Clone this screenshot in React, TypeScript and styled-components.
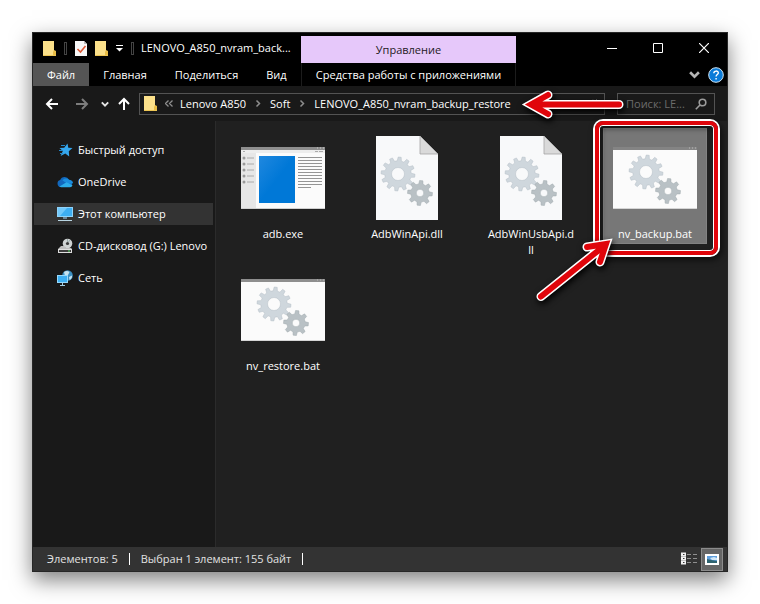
import React from "react";
import styled, { createGlobalStyle, css } from "styled-components";

const GlobalStyle = createGlobalStyle`
  * { box-sizing: border-box; }
  body {
    margin: 0;
    background: #fff;
    font-family: "Open Sans", "Noto Sans", sans-serif;
    font-size: 11px;
    line-height: 16px;
    color: #fff;
  }
  button, input { font: inherit; color: inherit; }
  svg { display: block; flex: none; }
`;

const plainButton = css`
  display: flex;
  align-items: center;
  justify-content: center;
  margin: 0;
  padding: 0;
  border: 0;
  background: none;
  white-space: nowrap;
`;

const Desktop = styled.div`
  display: flex;
  min-height: 100vh;
  padding: 32px;
`;

const Window = styled.main`
  display: flex;
  flex: 1;
  flex-direction: column;
  min-width: 0;
  border: 1px solid #262626;
  background: #191919;
  box-shadow: 0 8px 20px rgba(0, 0, 0, 0.5);
`;

const Header = styled.header`
  display: grid;
  grid-template-columns: 268px 215px 1fr;
  grid-template-rows: 30px 23px;
  background: #000;
`;

const QuickAccess = styled.div`
  display: flex;
  align-items: center;
  gap: 7px;
  padding-left: 10px;
  min-width: 0;
`;

const Grip = styled.span`
  width: 3px;
  height: 13px;
  border: 1px solid #444;
`;

const IconButton = styled.button<{ $width?: number }>`
  ${plainButton}
  width: ${(p) => p.$width ?? 14}px;
  height: 22px;
`;

const Title = styled.h1`
  margin: 0;
  font-size: 11px;
  font-weight: 400;
  white-space: nowrap;
`;

const ContextHeading = styled.div`
  display: flex;
  align-items: center;
  justify-content: center;
  margin-top: 3px;
  background: #e6c8fa;
  color: #1f1a24;
`;

const WindowControls = styled.div`
  display: flex;
  justify-content: flex-end;
`;

const ControlButton = styled.button`
  ${plainButton}
  width: 46px;
  height: 29px;
`;

const Tabs = styled.nav`
  display: flex;
`;

const Tab = styled.button<{ $file?: boolean }>`
  ${plainButton}
  padding: 0 14px;
  background: ${(p) => (p.$file ? "#555" : "transparent")};
`;

const ContextTab = styled.button`
  ${plainButton}
  border: solid #1c1c1c;
  border-width: 0 1px;
`;

const RibbonTools = styled.div`
  display: flex;
  align-items: center;
  justify-content: flex-end;
  gap: 8px;
  padding-right: 3px;
`;

const AddressRow = styled.div`
  display: flex;
  align-items: center;
  height: 35px;
  padding: 0 12px 0 8px;
`;

const History = styled.div`
  display: flex;
  align-items: center;
  width: 98px;
`;

const AddressBar = styled.div`
  position: relative;
  display: flex;
  flex: 1;
  align-items: center;
  height: 22px;
  min-width: 0;
  padding: 0 4px;
  border: 1px solid #535353;
`;

const Crumbs = styled.div`
  display: flex;
  flex: 1;
  align-items: center;
  gap: 7px;
`;

const Crumb = styled.a`
  color: #fff;
  text-decoration: none;
  white-space: nowrap;
`;

const SearchBox = styled.label`
  display: flex;
  align-items: center;
  width: 98px;
  height: 22px;
  margin-left: 12px;
  padding: 0 7px 0 8px;
  border: 1px solid #535353;
`;

const SearchInput = styled.input`
  flex: 1;
  min-width: 0;
  padding: 0;
  border: 0;
  outline: 0;
  background: transparent;
  &::placeholder { color: #6c6c6c; opacity: 1; }
`;

const Body = styled.div`
  display: flex;
  flex: 1;
`;

const Sidebar = styled.nav`
  display: flex;
  flex-direction: column;
  gap: 10px;
  width: 182px;
  padding: 18px 2px 18px 1px;
`;

const Place = styled.a<{ $current?: boolean }>`
  display: flex;
  align-items: center;
  gap: 5px;
  height: 22px;
  padding-left: 23px;
  background: ${(p) => (p.$current ? "#333" : "transparent")};
  color: #fff;
  text-decoration: none;
  white-space: nowrap;
`;

const Files = styled.section`
  display: grid;
  flex: 1;
  grid-template-columns: repeat(auto-fill, 104px);
  grid-auto-rows: 132px;
  column-gap: 20px;
  align-items: start;
  padding: 7px 15px;
  border-left: 1px solid #2b2b2b;
  background: #202020;
`;

const FileItem = styled.button<{ $selected?: boolean }>`
  ${plainButton}
  position: relative;
  flex-direction: column;
  padding: 1px 5px;
  border: 1px solid transparent;
  white-space: normal;
  ${(p) => p.$selected && css`
    background: #777;
    border-color: #828282;
  `}
`;

const Thumb = styled.span`
  display: flex;
  align-items: center;
  justify-content: center;
  height: 96px;
`;

const FileName = styled.span`
  width: 88px;
  overflow-wrap: anywhere;
  text-align: center;
`;

const HighlightFrame = styled.span`
  position: absolute;
  inset: -8px -12px -12px -9px;
  border: 4px solid #e0050b;
  border-radius: 8px;
  box-shadow: 0 0 0 2px #fff, inset 0 0 0 1px #fff, 2px 3px 6px 2px rgba(0, 0, 0, 0.6),
    inset 2px 3px 5px 1px rgba(0, 0, 0, 0.4);
`;

const BarArrow = styled.svg`
  position: absolute;
  right: -24px;
  top: -10px;
  z-index: 1;
  filter: drop-shadow(1px 3px 3px #000);
`;

const ItemArrow = styled.svg`
  position: absolute;
  left: -74px;
  top: 100px;
  filter: drop-shadow(1px 3px 3px #000);
`;

const StatusBar = styled.footer`
  display: flex;
  align-items: center;
  height: 24px;
  padding: 0 4px 0 14px;
  background: #333;
  color: #e2e2e2;
`;

const StatusText = styled.span`
  padding-right: 11px;
  margin-right: 11px;
  border-right: 1px solid #fff;
  line-height: 12px;
  white-space: nowrap;
`;

const ViewButtons = styled.div`
  display: flex;
  margin-left: auto;
`;

const ViewButton = styled.button<{ $active?: boolean }>`
  ${plainButton}
  width: 22px;
  height: 23px;
  border: 1px solid ${(p) => (p.$active ? "#8c8c8c" : "transparent")};
  background: ${(p) => (p.$active ? "#666" : "transparent")};
`;

const FolderIcon = () => (
  <svg width="14" height="17" viewBox="0 0 14 17">
    <path d="M0 1h11v11h2v4H0z" fill="#f3cf5f" />
    <path d="M0 1h11v15H0z" fill="#fbe08a" />
    <path d="M11 10l2 1v5h-3v-4z" fill="#e9bd45" />
    <path d="M0 15h13v1H0z" fill="#eec654" />
  </svg>
);

const PropertiesIcon = () => (
  <svg width="14" height="17" viewBox="0 0 14 17">
    <path d="M1 1h9l3 3v12H1z" fill="#f7f7f7" />
    <path d="M10 1l3 3h-3z" fill="#bbb" />
    <path d="M3.500 9l3 3 5-6" fill="none" stroke="#dd5a37" strokeWidth="1.600" />
  </svg>
);

const Arrow = ({ color, rotate = 0 }: { color: string; rotate?: number }) => (
  <svg width="14" height="14" viewBox="0 0 14 14" fill="none" stroke={color} strokeWidth="2">
    <path d="M13 7H2M7 2L2 7l5 5" transform={`rotate(${rotate} 7 7)`} />
  </svg>
);

const Chevron = ({ color, size }: { color: string; size: number }) => (
  <svg width={size} height={size} viewBox="0 0 10 10" fill="none" stroke={color} strokeWidth="2.400">
    <path d="M1 3l4 4 4-4" />
  </svg>
);

const CrumbSeparator = () => (
  <svg width="10" height="9" viewBox="0 0 10 9" fill="none" stroke="#8d8d8d" strokeWidth="1.500">
    <path d="M3.500 1.500l3 3-3 3" />
  </svg>
);

function gearPath(cx: number, cy: number, outer: number, inner: number, hole: number, teeth: number) {
  const points: string[] = [];
  const step = (Math.PI * 2) / teeth;
  const at = (radius: number, angle: number) =>
    `${(cx + radius * Math.cos(angle)).toFixed(2)} ${(cy + radius * Math.sin(angle)).toFixed(2)}`;
  for (let i = 0; i < teeth; i++) {
    const a = i * step - Math.PI / 2 + 0.1;
    points.push(at(inner, a - step * 0.3), at(outer, a - step * 0.17), at(outer, a + step * 0.17), at(inner, a + step * 0.3));
  }
  return `M${points.join("L")}ZM${cx - hole} ${cy}a${hole} ${hole} 0 1 0 ${hole * 2} 0a${hole} ${hole} 0 1 0 ${-hole * 2} 0Z`;
}

const Gears = ({ x, y }: { x: number; y: number }) => (
  <g transform={`translate(${x} ${y})`} fillRule="evenodd" strokeWidth="0.500" strokeLinejoin="round">
    <path d={gearPath(0, 0, 17, 13.2, 6.5, 12)} fill="#cfd7dd" stroke="#b3bdc4" />
    <path d={gearPath(22, 19, 12.5, 9.2, 3.8, 8)} fill="#b9c1c5" stroke="#9fa8ad" />
  </g>
);

const DllIcon = () => (
  <svg width="62" height="84" viewBox="0 0 62 84">
    <path d="M0 0h44l18 18v66H0z" fill="#f8f9fa" />
    <path d="M44 0l18 18H44z" fill="#dadada" stroke="#a5a5a5" strokeWidth="0.800" />
    <Gears x={22} y={38} />
  </svg>
);

const BatIcon = ({ selected = false }: { selected?: boolean }) => (
  <svg width="84" height="64" viewBox="0 0 84 64">
    <path d="M0 1h84v62H0z" fill="#fbfbfb" />
    <path d="M0 1h84v3H0z" fill={selected ? "#848484" : "#8e8e8e"} />
    <path d="M76 2h1M79 2h1M82 2h1" stroke="#bbb" />
    <path d="M0 62.500h84" stroke="#d5d5d5" />
    <Gears x={33} y={26} />
  </svg>
);

const ExeIcon = () => (
  <svg width="84" height="64" viewBox="0 0 84 64">
    <defs>
      <linearGradient id="pane" x2="1" y2="1">
        <stop offset="0" stopColor="#2088df" />
        <stop offset="0.500" stopColor="#0078d7" />
      </linearGradient>
    </defs>
    <path d="M0 1h84v62H0z" fill="#fbfbfb" />
    <path d="M0 1h84v3H0z" fill="#8e8e8e" />
    <path d="M76 2h1M79 2h1M82 2h1" stroke="#ccc" />
    <path d="M0 4h84v3H0z" fill="#ededed" />
    <path d="M2 5.500h2M74 5.500h3M78 5.500h4" stroke="#aaa" />
    <path d="M0 7h15v56H0z" fill="#e7e7e7" />
    {[12, 18, 24, 30, 36].map((y) => (
      <g key={y}>
        <circle cx="3" cy={y} r="1.500" fill="#999" />
        <path d={`M6 ${y}h7`} stroke="#aaa" />
      </g>
    ))}
    <path d="M18 10h36v47H18z" fill="url(#pane)" />
    {[0, 1, 2, 3, 4, 5, 6, 7, 8, 9, 10].map((n) => (
      <path key={n} d={`M57 ${11.5 + n * 3}h${n === 10 ? 13 : 24}`} stroke="#949494" />
    ))}
    <path d="M0 62.500h84" stroke="#d0d0d0" />
  </svg>
);

const StarIcon = () => (
  <svg width="16" height="16" viewBox="0 0 16 16">
    <path d="M10.500 1.500l.8 4.300 4.200.2-3.700 3.200.4 5.300-3.900-3-4.700 2.500 2.200-5L2.500 6l4.700-.3z" fill="#35a7ee" />
    <path d="M4 3.500h4M2 8.500h4M3 11.500h3" stroke="#2487ca" strokeWidth="1" />
  </svg>
);

const CloudIcon = () => (
  <svg width="16" height="16" viewBox="0 0 16 16">
    <path d="M4 13a3.500 3.500 0 0 1-.8-6.900A4.800 4.800 0 0 1 12 5.800 3.700 3.700 0 0 1 12.500 13z" fill="#1268bd" />
    <path d="M5.500 6.500A4 4 0 0 1 12 5.800c3 .2 4 2 4 3.500L11 10z" fill="#1b8ddd" />
    <path d="M2.500 12.500l7-4.300 6 3A2.900 2.900 0 0 1 13 13.200H4z" fill="#2cace9" />
  </svg>
);

const ComputerIcon = () => (
  <svg width="16" height="16" viewBox="0 0 16 16">
    <path d="M0 1h16v10H0z" fill="#8ed3fa" />
    <path d="M1 2h14v8H1z" fill="#3daef2" />
    <path d="M1 2h9L3 10H1z" fill="#71c8fa" />
    <path d="M6 11h4v2H6z" fill="#6a8698" />
    <path d="M1 14.500h14" stroke="#b8d5e2" />
  </svg>
);

const DiscDriveIcon = () => (
  <svg width="16" height="16" viewBox="0 0 16 16">
    <circle cx="10.500" cy="5.500" r="4.800" fill="#cfd3d3" />
    <path d="M10.500 1v3M13 2l-1.500 2" stroke="#9aa" />
    <circle cx="10.500" cy="5.500" r="1.600" fill="#3a3a3a" />
    <path d="M4 8h3l2 2h5l1 1H1z" fill="#bdbdbd" />
    <path d="M1 11h14v4H1z" fill="#dedede" />
    <path d="M2 12h12v2H2z" fill="#3d3d3d" />
    <path d="M11 13h2" stroke="#5fdb62" />
  </svg>
);

const NetworkIcon = () => (
  <svg width="16" height="16" viewBox="0 0 16 16">
    <circle cx="10.500" cy="5.500" r="5.300" fill="#3b8fc2" />
    <path d="M7 2c2-1.500 4-1.200 5.500 0L11 5 8 6zM12 7l3-1.500c.5 2-1 4-2.500 4.500z" fill="#c6e2ee" />
    <path d="M0 5h11v8H0z" fill="#96d8fb" />
    <path d="M1 6h9v6H1z" fill="#3caff3" />
    <path d="M5.500 13v2M3 15.500h5" stroke="#a4cfe4" />
  </svg>
);

const DetailsViewIcon = () => (
  <svg width="18" height="14" viewBox="0 0 18 14">
    {[0, 4, 8].map((y) => (
      <g key={y}>
        <path d={`M0 ${y + 0.5}h5v4H0z`} fill="#f0f0f0" />
        <path d={`M2 ${y + 2.5}h1.500`} stroke="#333" />
        <path d={`M6 ${y + 2.5}h4M12 ${y + 2.5}h4`} stroke="#8f8f8f" />
      </g>
    ))}
  </svg>
);

const LargeViewIcon = () => (
  <svg width="14" height="11" viewBox="0 0 14 11">
    <path d="M0 0h14v11H0z" fill="#fff" />
    <path d="M2 2h10v7H2z" fill="#5f9edc" />
    <path d="M5 4l4-1 3 1v2H7z" fill="#d4e9f8" />
    <path d="M2 5l4 1 6 1v2H2z" fill="#2f6470" />
  </svg>
);

const ArrowStroke = ({ path }: { path: string }) => (
  <g fill="none" strokeLinecap="round" strokeMiterlimit="8">
    <path d={path} stroke="#fff" strokeWidth="9" />
    <path d={path} stroke="#e0050b" strokeWidth="6" />
  </g>
);

const places = [
  { name: "Быстрый доступ", icon: <StarIcon /> },
  { name: "OneDrive", icon: <CloudIcon /> },
  { name: "Этот компьютер", icon: <ComputerIcon />, current: true },
  { name: "CD-дисковод (G:) Lenovo", icon: <DiscDriveIcon /> },
  { name: "Сеть", icon: <NetworkIcon /> },
];

const files = [
  { name: "adb.exe", icon: <ExeIcon /> },
  { name: "AdbWinApi.dll", icon: <DllIcon /> },
  { name: "AdbWinUsbApi.dll", icon: <DllIcon /> },
  { name: "nv_backup.bat", icon: <BatIcon selected />, selected: true },
  { name: "nv_restore.bat", icon: <BatIcon /> },
];

export default function App() {
  return (
    <>
      <GlobalStyle />
      <Desktop>
        <Window>
          <Header>
            <QuickAccess>
              <FolderIcon />
              <Grip />
              <IconButton aria-label="Свойства"><PropertiesIcon /></IconButton>
              <IconButton aria-label="Новая папка"><FolderIcon /></IconButton>
              <IconButton aria-label="Настройка панели" $width={8}>
                <svg width="8" height="8" viewBox="0 0 8 8">
                  <path d="M0 1.500h7" stroke="#fff" />
                  <path d="M0 4h7L3.500 7.500z" fill="#fff" />
                </svg>
              </IconButton>
              <Grip />
              <Title>LENOVO_A850_nvram_back...</Title>
            </QuickAccess>
            <ContextHeading>Управление</ContextHeading>
            <WindowControls>
              <ControlButton aria-label="Свернуть">
                <svg width="10" height="10" viewBox="0 0 10 10" stroke="#fff"><path d="M0 5.500h10" /></svg>
              </ControlButton>
              <ControlButton aria-label="Развернуть">
                <svg width="10" height="10" viewBox="0 0 10 10" stroke="#fff" fill="none"><path d="M.500 .500h9v9h-9z" /></svg>
              </ControlButton>
              <ControlButton aria-label="Закрыть">
                <svg width="10" height="10" viewBox="0 0 10 10" stroke="#fff" strokeWidth="1.200"><path d="M0 0l10 10M10 0L0 10" /></svg>
              </ControlButton>
            </WindowControls>
            <Tabs>
              <Tab $file>Файл</Tab>
              <Tab>Главная</Tab>
              <Tab>Поделиться</Tab>
              <Tab>Вид</Tab>
            </Tabs>
            <ContextTab>Средства работы с приложениями</ContextTab>
            <RibbonTools>
              <IconButton aria-label="Развернуть ленту" $width={12}><Chevron color="#b5b5b5" size={11} /></IconButton>
              <IconButton aria-label="Справка" $width={16}>
                <svg width="16" height="16" viewBox="0 0 16 16">
                  <circle cx="8" cy="8" r="7.300" fill="#0a7bd8" stroke="#cfe5f5" />
                  <path d="M5.800 6.300c0-3 4.500-2.800 4.500-.4 0 1.600-2.200 1.700-2.200 3.600M8.100 11v1.500" fill="none" stroke="#fff" strokeWidth="1.400" />
                </svg>
              </IconButton>
            </RibbonTools>
          </Header>

          <AddressRow>
            <History>
              <IconButton aria-label="Назад" $width={22}><Arrow color="#fff" /></IconButton>
              <IconButton aria-label="Вперёд" $width={38}><Arrow color="#7d7d7d" rotate={180} /></IconButton>
              <IconButton aria-label="Последние расположения" $width={8}><Chevron color="#e5e5e5" size={8} /></IconButton>
              <IconButton aria-label="Вверх" $width={30}><Arrow color="#fff" rotate={90} /></IconButton>
            </History>
            <AddressBar>
              <Crumbs>
                <FolderIcon />
                <svg width="8" height="9" viewBox="0 0 8 9" fill="none" stroke="#8d8d8d" strokeWidth="1.300">
                  <path d="M3.500 1.500l-3 3 3 3M7.500 1.500l-3 3 3 3" />
                </svg>
                <Crumb href="#a850">Lenovo A850</Crumb>
                <CrumbSeparator />
                <Crumb href="#soft">Soft</Crumb>
                <CrumbSeparator />
                <Crumb href="#nvram">LENOVO_A850_nvram_backup_restore</Crumb>
              </Crumbs>
              <IconButton aria-label="Обновить">
                <svg width="10" height="10" viewBox="0 0 10 10" fill="none" stroke="#555"><path d="M8 2.500A4 4 0 1 0 9 5M8.500 0v3h-3" /></svg>
              </IconButton>
              <BarArrow width="110" height="40" viewBox="518 84 110 40" aria-hidden="true">
                <ArrowStroke path="M548 95L531 104.500L548 114M533 104.500H619" />
              </BarArrow>
            </AddressBar>
            <SearchBox>
              <SearchInput type="text" aria-label="Поиск" placeholder="Поиск: LE..." />
              <svg width="12" height="12" viewBox="0 0 12 12" fill="none" stroke="#9c9c9c" strokeWidth="1.600">
                <circle cx="7.500" cy="4.500" r="3.300" />
                <path d="M5 7L.800 11.200" />
              </svg>
            </SearchBox>
          </AddressRow>

          <Body>
            <Sidebar>
              {places.map((place) => (
                <Place key={place.name} href="#place" $current={place.current}>
                  {place.icon}
                  {place.name}
                </Place>
              ))}
            </Sidebar>
            <Files>
              {files.map((file) => (
                <FileItem key={file.name} $selected={file.selected}>
                  <Thumb>{file.icon}</Thumb>
                  <FileName>{file.name}</FileName>
                  {file.selected && (
                    <>
                      <HighlightFrame />
                      <ItemArrow width="100" height="80" viewBox="530 229 100 80" aria-hidden="true">
                        <ArrowStroke path="M587 247L606 244L600 262M604 246L541 296.500" />
                      </ItemArrow>
                    </>
                  )}
                </FileItem>
              ))}
            </Files>
          </Body>

          <StatusBar>
            <StatusText>Элементов: 5</StatusText>
            <StatusText>Выбран 1 элемент: 155 байт</StatusText>
            <ViewButtons>
              <ViewButton aria-label="Таблица"><DetailsViewIcon /></ViewButton>
              <ViewButton aria-label="Крупные значки" $active><LargeViewIcon /></ViewButton>
            </ViewButtons>
          </StatusBar>
        </Window>
      </Desktop>
    </>
  );
}
